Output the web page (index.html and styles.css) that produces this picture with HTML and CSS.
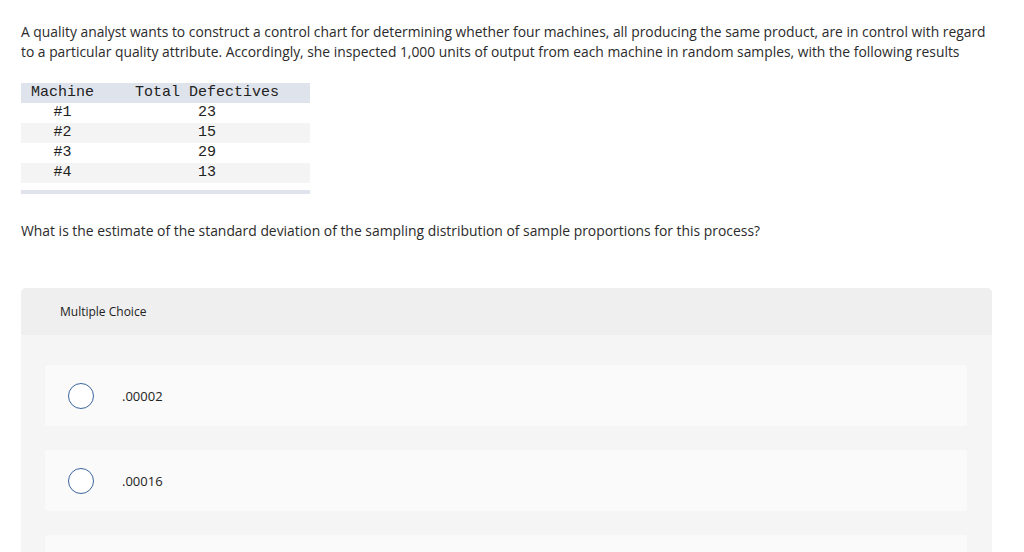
FILE: index.html
```html
<!DOCTYPE html>
<html>
<head>
<meta charset="utf-8">
<link rel="stylesheet" href="styles.css">
</head>
<body>
<div class="page">
  <p class="intro">A quality analyst wants to construct a control chart for determining whether four machines, all producing the same product, are in control with regard to a particular quality attribute. Accordingly, she inspected 1,000 units of output from each machine in random samples, with the following results</p>
  <div class="table-wrap">
    <table class="data">
      <thead>
        <tr><th class="c1">Machine</th><th class="c2">Total Defectives</th></tr>
      </thead>
      <tbody>
        <tr><td>#1</td><td>23</td></tr>
        <tr class="alt"><td>#2</td><td>15</td></tr>
        <tr><td>#3</td><td>29</td></tr>
        <tr class="alt"><td>#4</td><td>13</td></tr>
      </tbody>
    </table>
    <div class="table-foot"></div>
  </div>
  <p class="question">What is the estimate of the standard deviation of the sampling distribution of sample proportions for this process?</p>
  <div class="mc">
    <div class="mc-head">Multiple Choice</div>
    <div class="mc-body">
      <div class="option"><span class="radio"></span><span class="opt-text">.00002</span></div>
      <div class="option"><span class="radio"></span><span class="opt-text">.00016</span></div>
      <div class="option"><span class="radio"></span><span class="opt-text">.00023</span></div>
    </div>
  </div>
</div>
</body>
</html>
```

FILE: styles.css
```css
html, body {
  margin: 0;
  padding: 0;
  background: #ffffff;
}
body {
  font-family: "Open Sans", "Liberation Sans", sans-serif;
  color: #2b2b2b;
  overflow: hidden;
}
.page {
  padding: 22px 32px 0 21px;
}
.intro {
  margin: 0 -2px 0 0;
  font-size: 13.85px;
  line-height: 20px;
}
.table-wrap {
  margin-top: 21px;
  width: 289px;
}
.data {
  border-collapse: collapse;
  width: 289px;
  font-family: "Liberation Mono", monospace;
  font-size: 15px;
  color: #222;
}
.data th, .data td {
  height: 20px;
  padding: 0;
  text-align: center;
  font-weight: normal;
  line-height: 20px;
}
.data thead tr {
  background: #dfe3ec;
}
.c1 { width: 83px; }
.data tr.alt {
  background: #f4f4f4;
}
.table-foot {
  margin-top: 7px;
  height: 4px;
  background: #dfe3ec;
}
.question {
  margin: 27px 0 0 0;
  font-size: 13.9px;
  line-height: 20px;
}
.mc {
  margin-top: 47px;
  border-radius: 5px 5px 0 0;
  overflow: hidden;
  background: #f5f5f5;
}
.mc-head {
  background: #efefef;
  height: 47px;
  line-height: 47px;
  padding-left: 39px;
  font-size: 12px;
  color: #222;
}
.mc-body {
  padding: 30px 25px 0 24px;
  display: flex;
  flex-direction: column;
  gap: 24px;
}
.option {
  background: #fafafa;
  height: 61px;
  border-radius: 3px;
  display: flex;
  align-items: center;
  padding-left: 23px;
}
.radio {
  width: 24px;
  height: 24px;
  border: 1px solid #3a64a0;
  border-radius: 50%;
  background: #fff;
  flex: none;
}
.opt-text {
  margin-left: 28px;
  font-size: 13px;
  color: #222;
}
```
